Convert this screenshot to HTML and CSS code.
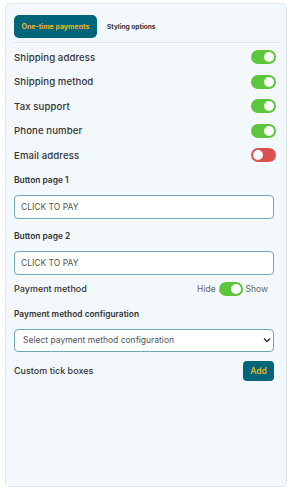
FILE: index.html
```html
<!DOCTYPE html>
<html>
<head>
<meta charset="utf-8">
<link rel="stylesheet" href="styles.css">
</head>
<body>
<div class="card">
  <div class="tabs">
    <button class="tab active">One-time payments</button>
    <button class="tab">Styling options</button>
  </div>
  <div class="divider"></div>
  <div class="row"><span class="lbl">Shipping address</span><span class="toggle on"></span></div>
  <div class="row"><span class="lbl">Shipping method</span><span class="toggle on"></span></div>
  <div class="row"><span class="lbl">Tax support</span><span class="toggle on"></span></div>
  <div class="row"><span class="lbl">Phone number</span><span class="toggle on"></span></div>
  <div class="row"><span class="lbl">Email address</span><span class="toggle off"></span></div>

  <div class="field first">
    <div class="flabel">Button page 1</div>
    <input class="input" type="text" value="CLICK TO PAY">
  </div>
  <div class="field">
    <div class="flabel">Button page 2</div>
    <input class="input" type="text" value="CLICK TO PAY">
  </div>

  <div class="prow">
    <span class="lbl sm">Payment method</span>
    <span class="hs"><span class="small">Hide</span><span class="toggle on"></span><span class="small">Show</span></span>
  </div>

  <div class="field cfg">
    <div class="flabel">Payment method configuration</div>
    <div class="select">
      <span>Select payment method configuration</span>
      <svg class="chev" width="8" height="6" viewBox="0 0 8 6"><path d="M1 1.5 L4 4.5 L7 1.5" fill="none" stroke="#333" stroke-width="1.4"/></svg>
    </div>
  </div>

  <div class="crow">
    <span class="lbl sm">Custom tick boxes</span>
    <button class="add">Add</button>
  </div>
</div>
</body>
</html>
```
FILE: styles.css
```css
html, body { margin: 0; padding: 0; background: #fff; }
body { padding: 3px 4px 4px 5px; font-family: "Inter", "Noto Sans", sans-serif; color: #333; }
.card {
  box-sizing: border-box;
  width: 282px;
  height: 484px;
  background: #f3f8fc;
  border: 1px solid #e1e6ea;
  border-radius: 5px;
  padding: 11px 10px 0 8px;
}
.tabs { display: flex; align-items: center; }
.tab {
  border: none; background: none; font-family: inherit;
  font-size: 6.6px; font-weight: 700; color: #333; padding: 0;
  height: 23px;
}
.tab.active {
  background: #006579; color: #e7b825; border-radius: 5px;
  width: 83px; margin-right: 10px; font-size: 7px;
}
.divider { height: 1px; background: #e0e6ea; margin: 4px 0 2px 0; width: 266px; }
.row { display: flex; align-items: center; justify-content: space-between; height: 24.5px; }
.lbl { font-size: 9.6px; letter-spacing: 0.1px; font-weight: 500; color: #333; }
.lbl.sm { font-size: 9px; letter-spacing: 0; }
.toggle {
  position: relative; display: inline-block;
  width: 25px; height: 14px; border-radius: 7px; background: #5cc73a;
  box-sizing: border-box;
}
.toggle::after {
  content: ""; position: absolute; top: 2px; width: 10px; height: 10px;
  border-radius: 50%; background: #fff;
}
.toggle.on::after { right: 2px; }
.toggle.off { background: #de4f4f; }
.toggle.off::after { left: 2px; }
.field { display: flex; flex-direction: column; }
.field.first { margin-top: 5px; }
.field + .field { margin-top: 10px; }
.flabel { font-size: 8.4px; font-weight: 600; color: #333; line-height: 14px; margin-bottom: 8px; }
.input {
  box-sizing: border-box; width: 260px; height: 24px;
  border: 1px solid #6ea9b8; border-radius: 4px; background: #fff;
  font-family: inherit; font-size: 8.5px; color: #555; padding: 0 6px; outline: none;
}
.prow { display: flex; align-items: center; justify-content: space-between; height: 20px; margin-top: 4px; width: 254px; }
.hs { display: flex; align-items: center; gap: 3px; }
.small { font-size: 8.5px; color: #666; }
.hs .toggle { width: 24px; }
.field.cfg { margin-top: 8px; }
.select {
  box-sizing: border-box; width: 260px; height: 23px;
  border: 1px solid #6ea9b8; border-radius: 4px; background: #fff;
  display: flex; align-items: center; justify-content: space-between;
  padding: 0 2px 0 8px; font-size: 8.5px; color: #555;
}
.crow { display: flex; align-items: center; justify-content: space-between; width: 260px; height: 20px; margin-top: 9px; }
.add {
  border: none; background: #006579; color: #e7b825; border-radius: 4px;
  width: 31px; height: 20px; font-family: inherit; font-size: 8.5px; font-weight: 600; padding: 0;
}
```
